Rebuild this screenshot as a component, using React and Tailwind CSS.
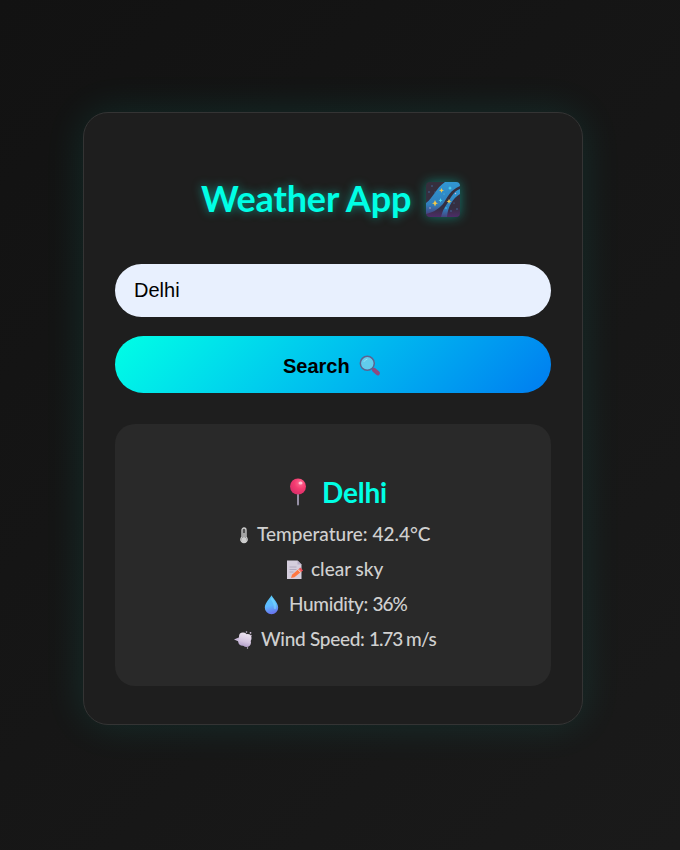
function GalaxyIcon() {
  return (
    <svg width="34" height="36" viewBox="0 0 34 36" className="drop-shadow-[0_0_6px_rgba(0,255,229,0.4)]">
      <defs>
        <clipPath id="sky"><rect width="34" height="35" rx="4" /></clipPath>
        <linearGradient id="night" x1="0" y1="0" x2="0" y2="1">
          <stop offset="0" stopColor="#352f3d" /><stop offset="0.75" stopColor="#352f42" /><stop offset="1" stopColor="#4d2c68" />
        </linearGradient>
        <linearGradient id="band" x1="0" y1="0" x2="0" y2="1">
          <stop offset="0" stopColor="#3197d2" /><stop offset="0.7" stopColor="#307fbd" /><stop offset="1" stopColor="#45447f" />
        </linearGradient>
      </defs>
      <g clipPath="url(#sky)">
        <rect width="34" height="35" fill="url(#night)" />
        <path d="M0 32V21C7 16 10 6 19 0H34V4C24 8 21 16 17 22C12 28 5 31 0 32Z" fill="url(#band)" />
        <path d="M34 7C26 10 24 18 19 25C17 28 16 31 15 35H21C22 24 27 16 34 12Z" fill="url(#band)" />
        <g fill="#f5ca49">
          <path d="M9 18l1 2.4 2 .8-2 .8-1 2.4-1-2.4-2-.8 2-.8z" />
          <path d="M15.500 6l.8 1.700 1.700.7-1.700.7-.8 1.700-.8-1.700-1.700-.7 1.700-.7z" />
          <path d="M23 17l.8 1.700 1.700.7-1.700.7-.8 1.700-.8-1.700-1.700-.7 1.700-.7z" />
        </g>
        <g fill="#50dcf5">
          <path d="M24 4l.6 1.500 1.400.6-1.400.6-.6 1.500-.6-1.500-1.400-.6 1.400-.6z" />
          <path d="M14.500 16l.6 1.700 1.500.6-1.500.6-.6 1.700-.6-1.700-1.500-.6 1.500-.6z" />
          <circle cx="20" cy="26" r=".7" /><circle cx="18" cy="12" r=".5" />
        </g>
        <g fill="#4779b5"><circle cx="6" cy="4" r=".7" /><circle cx="3" cy="10" r=".7" /><circle cx="9" cy="10" r=".6" /><circle cx="28" cy="21" r=".6" /><circle cx="31" cy="27" r=".7" /><circle cx="25" cy="29" r=".7" /></g>
        <g fill="#d7b1d3"><circle cx="4" cy="26" r=".7" /><circle cx="29.500" cy="11.500" r=".7" /></g>
      </g>
    </svg>
  );
}

function SearchIcon() {
  return (
    <svg width="22" height="22" viewBox="0 0 22 22">
      <path d="M13 13l2 2" stroke="#65538b" strokeWidth="2" />
      <path d="M15.200 15.200l3.500 3" stroke="#8f4a80" strokeWidth="4.400" strokeLinecap="round" />
      <circle cx="8.300" cy="8.300" r="7" fill="#62cdec" stroke="#5b6391" strokeWidth="1.500" />
      <path d="M5 6.500a4.500 4.500 0 0 1 3-2.300" fill="none" stroke="#94e3f5" strokeWidth="1" strokeLinecap="round" />
    </svg>
  );
}

function PinIcon() {
  return (
    <svg width="18" height="28" viewBox="0 0 18 28">
      <defs><radialGradient id="pin" cx=".65" cy=".28" r=".75"><stop offset="0" stopColor="#ff6a91" /><stop offset=".5" stopColor="#f43b70" /><stop offset="1" stopColor="#d92d69" /></radialGradient></defs>
      <rect x="8" y="14" width="2" height="13.500" rx="1" fill="#9690a5" />
      <circle cx="9" cy="8.500" r="8" fill="url(#pin)" />
      <ellipse cx="11.500" cy="5" rx="2" ry="1.600" fill="#ffc1d2" />
    </svg>
  );
}

function ThermometerIcon() {
  return (
    <svg width="8" height="17" viewBox="0 0 8 17">
      <path d="M2 10V3a2 2 0 0 1 4 0v7a3.200 3.200 0 1 1-4 0Z" fill="#555" stroke="#cfcfcf" strokeWidth="1.300" />
      <path d="M4 6v7" stroke="#cfcfcf" strokeWidth="1.300" /><circle cx="4" cy="12.800" r="2.600" fill="#cfcfcf" />
    </svg>
  );
}

function MemoIcon() {
  return (
    <svg width="18" height="20" viewBox="0 0 18 20">
      <path d="M1 .5h10.500l4 4V19H1Z" fill="#d5cedd" /><path d="M11.500.5v4h4Z" fill="#b7adc5" />
      <path d="M3.500 7h7M3.500 9.500h7M3.500 12h4" stroke="#aaa1b7" strokeWidth=".8" />
      <path d="M5 18l1-3.300 7-6 2.500 2.800-7 5.700Z" fill="#ff7843" /><path d="M13 8.700l1.300-1.200 2.800 3-1.600 1.300Z" fill="#f04e59" />
      <path d="M12 9.500l2.600 2.900" stroke="#eee2e7" strokeWidth="1" />
    </svg>
  );
}

function DropIcon() {
  return (
    <svg width="15" height="20" viewBox="0 0 15 20">
      <defs><linearGradient id="drop" x1="0" y1="0" x2=".2" y2="1"><stop offset="0" stopColor="#55c8f4" /><stop offset=".6" stopColor="#5eb9ff" /><stop offset="1" stopColor="#6878f0" /></linearGradient></defs>
      <path d="M7.500.3C8.500 2.500 14.200 8 14.200 12.700a6.700 6.600 0 0 1-13.400 0C.8 8 6.500 2.500 7.500.3Z" fill="url(#drop)" />
      <path d="M8 4c2 3 3.500 5 3 9" fill="none" stroke="#7edfff" strokeWidth="2.500" opacity=".5" strokeLinecap="round" />
    </svg>
  );
}

function WindIcon() {
  return (
    <svg width="20" height="18" viewBox="0 0 20 18">
      <defs><linearGradient id="wind" gradientUnits="userSpaceOnUse" x1="13" y1="1" x2="9" y2="17"><stop offset="0" stopColor="#f1e9f3" /><stop offset=".6" stopColor="#d3c4df" /><stop offset="1" stopColor="#a893c3" /></linearGradient></defs>
      <path d="M0 8.500l7-3v6Z" fill="#c9b9d8" />
      <g fill="url(#wind)"><circle cx="9" cy="5.500" r="4" /><circle cx="13.500" cy="7" r="4" /><circle cx="12.500" cy="11.500" r="4.500" /><circle cx="8.500" cy="10.500" r="4.300" /></g>
      <g fill="#d5c5dd"><circle cx="12.500" cy="1" r=".8" /><circle cx="16.500" cy="1.800" r=".9" /><circle cx="17" cy="4.500" r=".7" /><circle cx="13.500" cy="17" r=".7" /></g>
    </svg>
  );
}

export default function App() {
  return (
    <main className="h-[850px] w-[680px] overflow-hidden bg-linear-135 from-[#121212] to-[#1a1a1a] pt-28 pl-[83px] font-['Lato','Liberation_Sans',sans-serif]">
      <section className="h-[613px] w-[500px] rounded-[25px] border border-[#343434] bg-[#1e1e1e] px-[31px] pt-[63px] shadow-[0_0_40px_rgba(0,255,229,0.1)]">
        <h1 className="flex h-12 items-center pl-[86px] text-[36px] font-bold whitespace-nowrap text-[#00ffe5] [text-shadow:0_0_10px_rgba(0,255,229,0.5)]">
          <span className="w-[225px] pb-1 tracking-[-0.15px]">Weather App</span><GalaxyIcon />
        </h1>
        <input defaultValue="Delhi" aria-label="City" className="mt-10 block h-[53px] w-[436px] rounded-full bg-[#e8f0fe] px-[19px] font-['Liberation_Sans',sans-serif] text-[20px] text-black outline-none" />
        <button className="mt-[19px] flex h-[57px] w-[436px] items-center rounded-full bg-linear-135 from-[#00ffe5] to-[#007cf0] pt-[3px] pl-[168px] text-left font-['Liberation_Sans',sans-serif] text-[20px] font-bold text-black">
          <span className="w-[76px]">Search</span><SearchIcon />
        </button>
        <article className="mt-[31px] h-[262px] rounded-[20px] bg-[#292929] pt-[50px] text-[19px] font-medium text-[#d0d0d0]">
          <h2 className="flex h-9 items-center pl-[174px] text-[28px] font-bold text-[#00ffe5]">
            <span className="w-[33px]"><PinIcon /></span><span className="tracking-[-0.2px]">Delhi</span>
          </h2>
          <div className="mt-[7px] flex h-[35px] items-center pl-[125px] whitespace-nowrap"><span className="w-[17px] pt-px"><ThermometerIcon /></span><span>Temperature: 42.4°C</span></div>
          <div className="flex h-[35px] items-center pl-[171px] whitespace-nowrap"><span className="w-[25px]"><MemoIcon /></span><span>clear sky</span></div>
          <div className="flex h-[35px] items-center pl-[149px] whitespace-nowrap"><span className="w-[25px]"><DropIcon /></span><span className="tracking-[-0.35px]">Humidity: <span className="tracking-[-1px]">36%</span></span></div>
          <div className="flex h-[35px] items-center pl-[119px] whitespace-nowrap"><span className="w-[27px]"><WindIcon /></span><span className="tracking-[-0.3px]">Wind Speed: <span className="tracking-[-1.1px]">1.73 </span><span className="tracking-[-0.5px]">m/s</span></span></div>
        </article>
      </section>
    </main>
  );
}
